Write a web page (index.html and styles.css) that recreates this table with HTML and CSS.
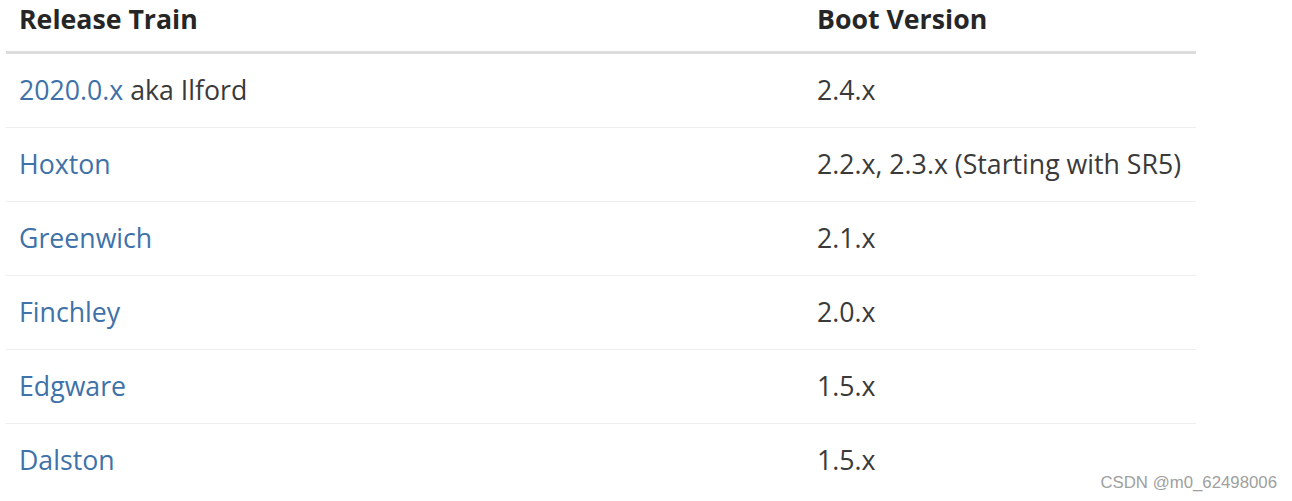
FILE: index.html
```html
<!DOCTYPE html>
<html>
<head>
<meta charset="utf-8">
<link rel="stylesheet" href="styles.css">
</head>
<body>
<table class="versions">
  <thead>
    <tr><th class="col-train">Release Train</th><th>Boot Version</th></tr>
  </thead>
  <tbody>
    <tr><td><a href="#">2020.0.x</a> aka Ilford</td><td>2.4.x</td></tr>
    <tr><td><a href="#">Hoxton</a></td><td>2.2.x, 2.3.x (Starting with SR5)</td></tr>
    <tr><td><a href="#">Greenwich</a></td><td>2.1.x</td></tr>
    <tr><td><a href="#">Finchley</a></td><td>2.0.x</td></tr>
    <tr><td><a href="#">Edgware</a></td><td>1.5.x</td></tr>
    <tr><td><a href="#">Dalston</a></td><td>1.5.x</td></tr>
  </tbody>
</table>
<div class="watermark">CSDN @m0_62498006</div>
</body>
</html>
```
FILE: styles.css
```css
html, body {
  margin: 0;
  padding: 0;
  background: #fff;
}
body {
  font-family: "Open Sans", "Noto Sans", sans-serif;
  color: #3a3a3a;
  width: 1292px;
  height: 501px;
  overflow: hidden;
  position: relative;
}
.versions {
  margin-left: 6px;
  width: 1190px;
  border-collapse: collapse;
  font-size: 26.7px;
  table-layout: fixed;
}
.versions th {
  text-align: left;
  font-weight: 700;
  color: #262626;
  line-height: 38px;
  padding: 0 13px 13px;
  border-bottom: 3px solid #dcdcdc;
  white-space: nowrap;
}
.versions .col-train {
  width: 772px;
}
.versions td {
  line-height: 38px;
  padding: 17px 13px 18px;
  border-top: 1px solid #eeeeee;
  white-space: nowrap;
}
.versions tbody tr:first-child td {
  border-top: none;
  padding-top: 17px;
}
.versions a {
  color: #3e72a8;
  text-decoration: none;
}
.watermark {
  position: absolute;
  right: 15px;
  bottom: 8px;
  font-family: "Liberation Sans", Arial, sans-serif;
  font-size: 16.8px;
  color: #a0a0a0;
}
```
